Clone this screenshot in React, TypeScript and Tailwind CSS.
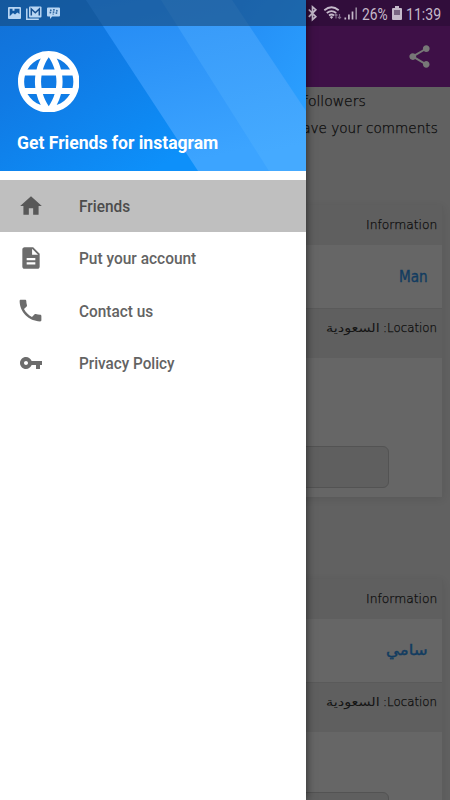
import React from "react";

const THIN = "font-['DejaVu_Sans_Light','DejaVu_Sans',sans-serif] font-extralight [-webkit-text-stroke:0.25px_#0c0c0c]";

function Card({ name, arabic }: { name: string; arabic?: boolean }) {
  return (
    <section className="h-[292px] w-[443px] shrink-0 rounded-t border-r border-[#5d5d5d] bg-[#666666] shadow-[0_2px_8px_rgba(0,0,0,0.09)]">
      <div className="flex h-10 justify-end bg-[#5f5f5f] pr-[5px] pt-[10px]">
        <Fit text="Information" width={71} className={`${THIN} text-[12.5px] leading-5 text-[#0c0c0c]`} />
      </div>
      <div className="flex h-[63px] items-center justify-end pr-[14px]">
        <Fit
          text={name}
          width={arabic ? 42 : 29}
          className="font-['DejaVu_Sans',sans-serif] text-[15px] font-normal leading-5 text-[#123c60] [-webkit-text-stroke:0.4px_#123c60]"
        />
      </div>
      <div className="flex h-[50px] justify-end gap-[3px] border-t border-[#5a5a5a] bg-[#5f5f5f] pr-[5px] pt-[9px]">
        <Fit text="السعودية" width={54} className="font-['DejaVu_Sans',sans-serif] text-[12px] leading-5 text-[#151515]" />
        <Fit text="Location:" width={54} rtl className={`${THIN} text-[12.5px] leading-5 text-[#0c0c0c]`} />
      </div>
      <div className={`flex h-[139px] justify-end pr-[53px] ${arabic ? "pt-[60px]" : "pt-[88px]"}`}>
        <div className="h-[42px] w-[200px] rounded-[6px] border border-[#535353] bg-[#5f5f5f]" />
      </div>
    </section>
  );
}

/* Text drawn to an exact advance width. */
function Fit({ text, width, className, rtl }: { text: string; width: number; className: string; rtl?: boolean }) {
  const ref = React.useRef<HTMLSpanElement>(null);
  const [scale, setScale] = React.useState(1);
  React.useLayoutEffect(() => {
    if (ref.current) setScale(width / ref.current.offsetWidth);
  }, [width, text]);
  return (
    <span className="flex h-5 items-start whitespace-nowrap" style={{ width }}>
      <span
        ref={ref}
        dir={rtl ? "rtl" : "auto"}
        className={`block shrink-0 origin-left ${className}`}
        style={{ transform: `scaleX(${scale})` }}
      >
        {text}
      </span>
    </span>
  );
}

function StatusLeft() {
  return (
    <svg className="block h-[26px] w-[70px]" viewBox="0 0 70 26">
      <path fill="#b9d6f3" fillRule="evenodd" d="M9 7h11q1 0 1 1v10q0 1-1 1H9q-1 0-1-1V8q0-1 1-1zM9.700 8.700v7.500l3.300-3.200 2 1.500 2.300-2 2.200 1.500V8.700h-5v2h-2v-2z" />
      <path fill="none" stroke="#b9d6f3" strokeWidth="1.5" d="M26.800 8.500v10.800h12" />
      <rect x="29" y="6.500" width="12.500" height="11" rx="1" fill="#b9d6f3" />
      <path fill="none" stroke="#164f90" strokeWidth="1.500" d="M31.300 15.500V9l4 3.800 4-3.800v6.500" />
      <path fill="#b9d6f3" d="M48 7.500h11q1 0 1 1v7q0 1-1 1h-6.800L50 19v-2.500h-2q-1 0-1-1v-7q0-1 1-1z" />
      <path stroke="#2b649f" strokeWidth="1.600" strokeDasharray="1.700 .6" d="M51 9.500l-.8 4M54 9l-.8 5.500M57 10l-.8 4.500" />
    </svg>
  );
}

function StatusIcons() {
  return (
    <svg className="block h-[26px] w-[52px] shrink-0" viewBox="307 0 52 26" fill="none" stroke="#c5b9ca">
      <path strokeWidth="1.700" d="M308.800 9.500l7 7.200-3.300 3V6.800l3.300 2.900-7 7.200" />
      <g strokeWidth="1.800">
        <path d="M324.300 10.300q7.200-6 14.400 0" />
        <path d="M326.800 13q4.700-3.800 9.400 0" />
        <path d="M329 15.400q2.500-1.800 5 0" />
      </g>
      <path fill="#c5b9ca" stroke="none" d="M329.700 17l1.800-1 1.800 1-1.800 2z" />
      <path stroke="#806a89" strokeWidth="1.200" d="M336 18.500v-4.500m-1.500 1.500L336 14l1.500 1.500M339.500 14v4.500m-1.500-1.500 1.500 1.500 1.500-1.500" />
      <path strokeWidth="1.700" d="M345.300 19.500v-2M348.900 19.500v-5M352.500 19.500v-8" />
      <path stroke="#96879d" strokeWidth="1.600" d="M356.200 19.500V7.500" />
    </svg>
  );
}

function HeaderArt() {
  return (
    <svg className="absolute inset-0 h-[171px] w-[306px]" viewBox="0 0 306 171">
      <defs>
        <linearGradient id="deep" x1="0" y1="0" x2="1" y2="1">
          <stop offset="0" stopColor="#1270d6" />
          <stop offset=".3" stopColor="#107ae4" />
          <stop offset=".75" stopColor="#0d90fa" />
        </linearGradient>
        <linearGradient id="mid" x1="0" y1="0" x2=".3" y2="1">
          <stop offset="0" stopColor="#2389f3" />
          <stop offset="1" stopColor="#3ca4ff" />
        </linearGradient>
        <linearGradient id="pale" x1="0" y1="0" x2=".2" y2="1">
          <stop offset="0" stopColor="#3698f8" />
          <stop offset="1" stopColor="#45aaff" />
        </linearGradient>
        <linearGradient id="edge" x1="0" y1="0" x2="1" y2="1">
          <stop offset="0" stopColor="#238bf4" />
          <stop offset="1" stopColor="#2ba0ff" />
        </linearGradient>
      </defs>
      <path fill="url(#deep)" d="M0 0h306v171H0z" />
      <path fill="url(#mid)" d="M86 0h220v171H198z" />
      <path fill="url(#pale)" d="M161 0h145v171h-37z" />
      <path fill="url(#edge)" d="M232 0h74v111z" />
      <path fill="#174a7d" fillOpacity=".62" d="M0 0h306v26H0z" />
    </svg>
  );
}

function Globe() {
  return (
    <svg className="block h-[61.5px] w-[61.5px]" viewBox="2 2 20 20" fill="white">
      <path d="M11.990 2C6.470 2 2 6.480 2 12s4.470 10 9.990 10C17.520 22 22 17.520 22 12S17.520 2 11.990 2zm6.930 6h-2.950c-.32-1.250-.78-2.450-1.380-3.560 1.840.63 3.370 1.910 4.330 3.560zM12 4.040c.83 1.200 1.480 2.530 1.910 3.960h-3.820c.43-1.430 1.080-2.760 1.910-3.960zM4.260 14C4.100 13.360 4 12.690 4 12s.1-1.360.26-2h3.380c-.08.66-.14 1.320-.14 2 0 .68.06 1.340.14 2H4.260zm.82 2h2.950c.32 1.250.78 2.450 1.380 3.560-1.840-.63-3.370-1.900-4.330-3.560zm2.950-8H5.080c.96-1.660 2.490-2.930 4.330-3.560C8.810 5.550 8.350 6.750 8.030 8zM12 19.960c-.83-1.200-1.480-2.530-1.910-3.960h3.820c-.43 1.430-1.080 2.760-1.910 3.960zM14.340 14H9.660c-.09-.66-.16-1.320-.16-2 0-.68.07-1.350.16-2h4.680c.09.65.16 1.320.16 2 0 .68-.07 1.340-.16 2zm.25 5.560c.6-1.110 1.060-2.310 1.380-3.560h2.950c-.96 1.650-2.490 2.930-4.330 3.560zM16.360 14c.08-.66.14-1.320.14-2 0-.68-.06-1.340-.14-2h3.380c.16.64.26 1.310.26 2s-.1 1.360-.26 2h-3.380z" />
    </svg>
  );
}

const items = [
  { label: "Friends", width: 51, icon: "size-[26px]", path: "M10 20v-6h4v6h5v-8h3L12 3 2 12h3v8z" },
  { label: "Put your account", width: 117, icon: "size-[26px]", path: "M14 2H6c-1.1 0-1.99.9-1.99 2L4 20c0 1.1.89 2 1.99 2H18c1.1 0 2-.9 2-2V8l-6-6zm2 16H8v-2h8v2zm0-4H8v-2h8v2zm-3-5V3.5L18.500 9H13z" },
  { label: "Contact us", width: 74, icon: "size-[29px]", path: "M6.620 10.790c1.440 2.830 3.760 5.140 6.590 6.590l2.200-2.200c.27-.27.67-.36 1.020-.24 1.120.37 2.330.57 3.570.57.55 0 1 .45 1 1V20c0 .55-.45 1-1 1-9.390 0-17-7.610-17-17 0-.55.45-1 1-1h3.500c.55 0 1 .45 1 1 0 1.250.2 2.450.57 3.570.11.35.03.74-.25 1.020l-2.200 2.200z" },
  { label: "Privacy Policy", width: 95.5, icon: "size-[24px]", path: "M12.650 10C11.830 7.670 9.610 6 7 6c-3.310 0-6 2.690-6 6s2.690 6 6 6c2.610 0 4.830-1.670 5.650-4H17v4h4v-4h2v-4H12.650zM7 14c-1.100 0-2-.9-2-2s.9-2 2-2 2 .9 2 2-.9 2-2 2z" },
];

function Drawer() {
  return (
    <aside className="absolute inset-y-0 left-0 w-[306px] bg-white shadow-[0_0_9px_rgba(0,0,0,0.6)]">
      <header className="relative h-[171px] overflow-hidden">
        <HeaderArt />
        <div className="relative">
          <StatusLeft />
          <div className="pl-[17.5px] pt-[24.5px]"><Globe /></div>
          <div className="pl-[17px] pt-[20.5px]">
            <Fit text="Get Friends for instagram" width={201.5} className="font-[Roboto,sans-serif] text-[17.5px] font-bold leading-5 text-white" />
          </div>
        </div>
      </header>
      <nav className="pt-[8.5px]">
        {items.map((item, i) => (
          <div key={item.label} className={`flex h-[52.5px] items-center pl-[16px] ${i === 0 ? "bg-[#bfbfbf]" : ""}`}>
            <div className="mr-[33.5px] flex w-[29px] shrink-0 justify-center">
              <svg className={`shrink-0 ${item.icon}`} viewBox="0 0 24 24" fill={i === 0 ? "#585858" : "#6c6c6c"}>
                <path d={item.path} />
              </svg>
            </div>
            <div className="pt-[2px]">
              <Fit
                text={item.label}
                width={item.width}
                className={`font-[Roboto,sans-serif] text-[16px] font-medium leading-5 ${i === 0 ? "text-[#4c4c4c]" : "text-[#636363]"}`}
              />
            </div>
          </div>
        ))}
      </nav>
    </aside>
  );
}

export default function App() {
  return (
    <main className="relative flex h-[800px] w-[450px] flex-col overflow-hidden bg-[#616161]">
      <div className="flex h-[26px] shrink-0 items-center bg-[#310d3b] pl-[307px]">
        <StatusIcons />
        <div className="ml-[3px] mt-[3px]"><Fit text="26%" width={26} className="font-[Roboto,sans-serif] text-[16.5px] leading-5 text-[#c5b9ca]" /></div>
        <svg className="ml-1 h-[14px] w-[10px] shrink-0" viewBox="0 0 10 14">
          <path fill="#c5b9ca" d="M3 0h4v2h2q1 0 1 1v10q0 1-1 1H1q-1 0-1-1V3q0-1 1-1h2z" />
          <path fill="#796582" d="M2 4h6v5H2z" />
        </svg>
        <div className="ml-[4px] mt-[3px]"><Fit text="11:39" width={35} className="font-[Roboto,sans-serif] text-[16.5px] leading-5 text-[#c5b9ca]" /></div>
      </div>
      <div className="flex h-[61px] shrink-0 items-center justify-end bg-[#3e1047] pr-[17px]">
        <svg className="h-[27px] w-[27px]" viewBox="0 0 24 24" fill="#777777">
          <path d="M18 16.080c-.76 0-1.440.3-1.960.77L8.910 12.700c.05-.23.09-.46.09-.7s-.04-.47-.09-.7l7.050-4.110c.54.5 1.250.81 2.040.81 1.660 0 3-1.340 3-3s-1.340-3-3-3-3 1.340-3 3c0 .24.04.47.09.7L8.040 9.810C7.500 9.310 6.790 9 6 9c-1.660 0-3 1.340-3 3s1.340 3 3 3c.79 0 1.500-.31 2.040-.81l7.120 4.160c-.05.21-.08.43-.08.65 0 1.610 1.310 2.920 2.920 2.920s2.920-1.310 2.920-2.920-1.310-2.920-2.920-2.920z" />
        </svg>
      </div>
      <div className="flex h-[118px] shrink-0 flex-col gap-[7px] pl-[303px] pt-[4px]">
        <Fit text="followers" width={63} className={`${THIN} text-[13.5px] leading-5 text-[#0c0c0c]`} />
        <div className="-ml-[13px]"><Fit text="leave your comments" width={148} className={`${THIN} text-[13.5px] leading-5 text-[#0c0c0c]`} /></div>
      </div>
      <div className="flex flex-col gap-[81.5px]">
        <Card name="Man" />
        <Card name="سامي" arabic />
      </div>
      <Drawer />
    </main>
  );
}
